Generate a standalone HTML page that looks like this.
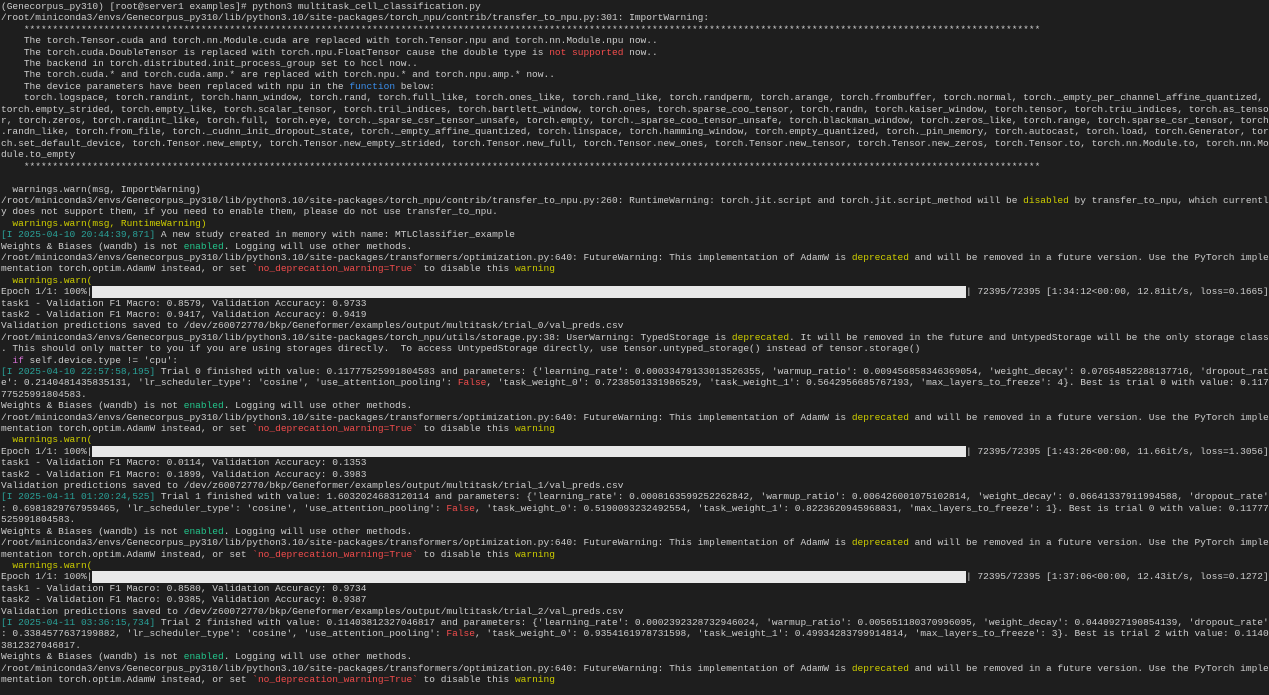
<!DOCTYPE html>
<html><head><meta charset="utf-8">
<style>
html,body{margin:0;padding:0;background:#1e1e1e;}
body{width:1269px;height:695px;overflow:hidden;}
pre{margin:0;padding:1px 0 0 1px;font-family:"Liberation Mono",monospace;font-size:9.53px;line-height:11.4px;color:#cccccc;white-space:pre;}
.y{color:#cdcd00}.g{color:#23c48b}.t{color:#2aa198}.r{color:#f14c4c}.m{color:#d670d6}.b{color:#3b8eea}
.bar{display:inline-block;width:153ch;height:11.4px;background:#e8e8e8;vertical-align:top;}
</style></head><body><pre>(Genecorpus_py310) [root@server1 examples]# python3 multitask_cell_classification.py
/root/miniconda3/envs/Genecorpus_py310/lib/python3.10/site-packages/torch_npu/contrib/transfer_to_npu.py:301: ImportWarning:
    **********************************************************************************************************************************************************************************
    The torch.Tensor.cuda and torch.nn.Module.cuda are replaced with torch.Tensor.npu and torch.nn.Module.npu now..
    The torch.cuda.DoubleTensor is replaced with torch.npu.FloatTensor cause the double type is <span class="r">not supported</span> now..
    The backend in torch.distributed.init_process_group set to hccl now..
    The torch.cuda.* and torch.cuda.amp.* are replaced with torch.npu.* and torch.npu.amp.* now..
    The device parameters have been replaced with npu in the <span class="b">function</span> below:
    torch.logspace, torch.randint, torch.hann_window, torch.rand, torch.full_like, torch.ones_like, torch.rand_like, torch.randperm, torch.arange, torch.frombuffer, torch.normal, torch._empty_per_channel_affine_quantized,
torch.empty_strided, torch.empty_like, torch.scalar_tensor, torch.tril_indices, torch.bartlett_window, torch.ones, torch.sparse_coo_tensor, torch.randn, torch.kaiser_window, torch.tensor, torch.triu_indices, torch.as_tenso
r, torch.zeros, torch.randint_like, torch.full, torch.eye, torch._sparse_csr_tensor_unsafe, torch.empty, torch._sparse_coo_tensor_unsafe, torch.blackman_window, torch.zeros_like, torch.range, torch.sparse_csr_tensor, torch
.randn_like, torch.from_file, torch._cudnn_init_dropout_state, torch._empty_affine_quantized, torch.linspace, torch.hamming_window, torch.empty_quantized, torch._pin_memory, torch.autocast, torch.load, torch.Generator, tor
ch.set_default_device, torch.Tensor.new_empty, torch.Tensor.new_empty_strided, torch.Tensor.new_full, torch.Tensor.new_ones, torch.Tensor.new_tensor, torch.Tensor.new_zeros, torch.Tensor.to, torch.nn.Module.to, torch.nn.Mo
dule.to_empty
    **********************************************************************************************************************************************************************************

  warnings.warn(msg, ImportWarning)
/root/miniconda3/envs/Genecorpus_py310/lib/python3.10/site-packages/torch_npu/contrib/transfer_to_npu.py:260: RuntimeWarning: torch.jit.script and torch.jit.script_method will be <span class="y">disabled</span> by transfer_to_npu, which currentl
y does not support them, if you need to enable them, please do not use transfer_to_npu.
  <span class="y">warnings.warn(msg, RuntimeWarning)</span>
<span class="t">[I 2025-04-10 20:44:39,871]</span> A new study created in memory with name: MTLClassifier_example
Weights &amp; Biases (wandb) is not <span class="g">enabled</span>. Logging will use other methods.
/root/miniconda3/envs/Genecorpus_py310/lib/python3.10/site-packages/transformers/optimization.py:640: FutureWarning: This implementation of AdamW is <span class="y">deprecated</span> and will be removed in a future version. Use the PyTorch imple
mentation torch.optim.AdamW instead, or set <span class="r">`no_deprecation_warning=True`</span> to disable this <span class="y">warning</span>
  <span class="y">warnings.warn(</span>
Epoch 1/1: 100%|<span class="bar"></span>| 72395/72395 [1:34:12&lt;00:00, 12.81it/s, loss=0.1665]
task1 - Validation F1 Macro: 0.8579, Validation Accuracy: 0.9733
task2 - Validation F1 Macro: 0.9417, Validation Accuracy: 0.9419
Validation predictions saved to /dev/z60072770/bkp/Geneformer/examples/output/multitask/trial_0/val_preds.csv
/root/miniconda3/envs/Genecorpus_py310/lib/python3.10/site-packages/torch_npu/utils/storage.py:38: UserWarning: TypedStorage is <span class="y">deprecated</span>. It will be removed in the future and UntypedStorage will be the only storage class
. This should only matter to you if you are using storages directly.  To access UntypedStorage directly, use tensor.untyped_storage() instead of tensor.storage()
  <span class="m">if</span> self.device.type != 'cpu':
<span class="t">[I 2025-04-10 22:57:58,195]</span> Trial 0 finished with value: 0.11777525991804583 and parameters: {'learning_rate': 0.00033479133013526355, 'warmup_ratio': 0.009456858346369054, 'weight_decay': 0.07654852288137716, 'dropout_rat
e': 0.2140481435835131, 'lr_scheduler_type': 'cosine', 'use_attention_pooling': <span class="r">False</span>, 'task_weight_0': 0.7238501331986529, 'task_weight_1': 0.5642956685767193, 'max_layers_to_freeze': 4}. Best is trial 0 with value: 0.117
77525991804583.
Weights &amp; Biases (wandb) is not <span class="g">enabled</span>. Logging will use other methods.
/root/miniconda3/envs/Genecorpus_py310/lib/python3.10/site-packages/transformers/optimization.py:640: FutureWarning: This implementation of AdamW is <span class="y">deprecated</span> and will be removed in a future version. Use the PyTorch imple
mentation torch.optim.AdamW instead, or set <span class="r">`no_deprecation_warning=True`</span> to disable this <span class="y">warning</span>
  <span class="y">warnings.warn(</span>
Epoch 1/1: 100%|<span class="bar"></span>| 72395/72395 [1:43:26&lt;00:00, 11.66it/s, loss=1.3056]
task1 - Validation F1 Macro: 0.0114, Validation Accuracy: 0.1353
task2 - Validation F1 Macro: 0.1899, Validation Accuracy: 0.3983
Validation predictions saved to /dev/z60072770/bkp/Geneformer/examples/output/multitask/trial_1/val_preds.csv
<span class="t">[I 2025-04-11 01:20:24,525]</span> Trial 1 finished with value: 1.6032024683120114 and parameters: {'learning_rate': 0.0008163599252262842, 'warmup_ratio': 0.006426001075102814, 'weight_decay': 0.06641337911994588, 'dropout_rate'
: 0.6981829767959465, 'lr_scheduler_type': 'cosine', 'use_attention_pooling': <span class="r">False</span>, 'task_weight_0': 0.5190093232492554, 'task_weight_1': 0.8223620945968831, 'max_layers_to_freeze': 1}. Best is trial 0 with value: 0.11777
525991804583.
Weights &amp; Biases (wandb) is not <span class="g">enabled</span>. Logging will use other methods.
/root/miniconda3/envs/Genecorpus_py310/lib/python3.10/site-packages/transformers/optimization.py:640: FutureWarning: This implementation of AdamW is <span class="y">deprecated</span> and will be removed in a future version. Use the PyTorch imple
mentation torch.optim.AdamW instead, or set <span class="r">`no_deprecation_warning=True`</span> to disable this <span class="y">warning</span>
  <span class="y">warnings.warn(</span>
Epoch 1/1: 100%|<span class="bar"></span>| 72395/72395 [1:37:06&lt;00:00, 12.43it/s, loss=0.1272]
task1 - Validation F1 Macro: 0.8580, Validation Accuracy: 0.9734
task2 - Validation F1 Macro: 0.9385, Validation Accuracy: 0.9387
Validation predictions saved to /dev/z60072770/bkp/Geneformer/examples/output/multitask/trial_2/val_preds.csv
<span class="t">[I 2025-04-11 03:36:15,734]</span> Trial 2 finished with value: 0.11403812327046817 and parameters: {'learning_rate': 0.0002392328732946024, 'warmup_ratio': 0.005651180370996095, 'weight_decay': 0.0440927190854139, 'dropout_rate'
: 0.3384577637199882, 'lr_scheduler_type': 'cosine', 'use_attention_pooling': <span class="r">False</span>, 'task_weight_0': 0.9354161978731598, 'task_weight_1': 0.49934283799914814, 'max_layers_to_freeze': 3}. Best is trial 2 with value: 0.1140
3812327046817.
Weights &amp; Biases (wandb) is not <span class="g">enabled</span>. Logging will use other methods.
/root/miniconda3/envs/Genecorpus_py310/lib/python3.10/site-packages/transformers/optimization.py:640: FutureWarning: This implementation of AdamW is <span class="y">deprecated</span> and will be removed in a future version. Use the PyTorch imple
mentation torch.optim.AdamW instead, or set <span class="r">`no_deprecation_warning=True`</span> to disable this <span class="y">warning</span>
</pre></body></html>
